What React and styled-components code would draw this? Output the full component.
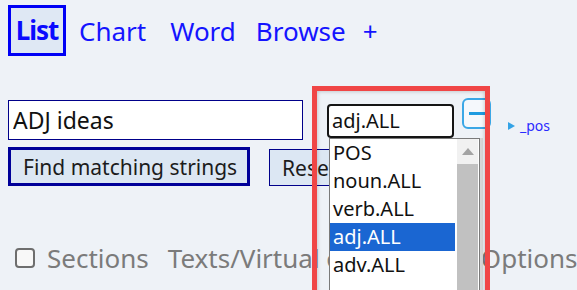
import React from "react"
import styled, { createGlobalStyle } from "styled-components"

const GlobalStyle = createGlobalStyle`
  body {
    margin: 0;
    background-color: #eef2f7;
    font-family: "Noto Sans", "Open Sans", sans-serif;
  }
`

const Page = styled.div`
  position: relative;
  height: 290px;
  overflow: hidden;
  padding: 5px 8px 0;
  box-sizing: border-box;
`

const TabBar = styled.nav`
  display: flex;
  align-items: center;
  height: 51px;
`

const Tab = styled.a`
  font-size: 26px;
  color: #1414ff;
  text-decoration: none;
  margin-right: ${(p) => p.$gap}px;
  ${(p) =>
    p.$active &&
    `
    font-weight: 700;
    border: 3px solid #0000f5;
    background-color: #dfe8f4;
    width: 58px;
    box-sizing: border-box;
    text-align: center;
    letter-spacing: -1px;
    line-height: 45px;
    color: #0a0aff;
  `}
`

const Form = styled.div`
  margin-top: 44px;
`

const Row = styled.div`
  display: flex;
  align-items: flex-start;
`

const TextInput = styled.input`
  width: 295px;
  height: 40px;
  box-sizing: border-box;
  border: 1px solid #00008a;
  background-color: white;
  font-family: inherit;
  font-size: 23px;
  color: #111;
  padding: 0 4px;
  outline: none;
`

const SelectWrap = styled.div`
  position: relative;
  margin: 4px 0 0 24px;
`

const SelectBox = styled.div`
  width: 127px;
  height: 34px;
  box-sizing: border-box;
  border: 2px solid #151515;
  border-radius: 4px;
  background-color: white;
  font-size: 20px;
  line-height: 30px;
  padding-left: 3px;
  color: #111;
`

const Dropdown = styled.div`
  position: absolute;
  top: 34px;
  left: 2px;
  width: 151px;
  height: 170px;
  box-sizing: border-box;
  border: 1px solid #7a7a7a;
  background-color: white;
  display: flex;
  z-index: 5;
  box-shadow: 3px 0 0 #d8d8d8;
`

const OptionList = styled.ul`
  list-style: none;
  margin: 0;
  padding: 0;
  width: 125px;
`

const Option = styled.li`
  height: 28px;
  line-height: 28px;
  font-size: 20px;
  padding-left: 3px;
  color: ${(p) => (p.$selected ? "white" : "#111")};
  background-color: ${(p) => (p.$selected ? "#1a66d2" : "transparent")};
`

const Scrollbar = styled.div`
  width: 21px;
  margin-left: 2px;
  background-color: #c1c1c1;
  display: flex;
  flex-direction: column;
`

const ScrollUp = styled.div`
  height: 25px;
  background-color: #f1f1f1;
  display: flex;
  align-items: center;
  justify-content: center;
`

const MinusButton = styled.button`
  margin: -2px 0 0 8px;
  width: 29px;
  height: 31px;
  box-sizing: border-box;
  border: 2px solid #3ba7e6;
  border-radius: 6px;
  background-color: #f5f8fc;
  display: flex;
  align-items: center;
  justify-content: center;
  padding: 0;

  span {
    width: 16px;
    height: 3px;
    background-color: #1e9be0;
  }
`

const PosLink = styled.a`
  margin: 16px 0 0 17px;
  display: flex;
  align-items: center;
  gap: 5px;
  font-size: 14px;
  color: #2a2aff;
  text-decoration: none;

  i {
    width: 0;
    height: 0;
    border-top: 4px solid transparent;
    border-bottom: 4px solid transparent;
    border-left: 7px solid #33a3e6;
  }
`

const ActionRow = styled(Row)`
  margin-top: 7px;
`

const Button = styled.button`
  font-family: inherit;
  font-size: 21px;
  color: #1c1c1c;
  background-color: #dce7f3;
  box-sizing: border-box;
  white-space: nowrap;
  border: ${(p) => (p.$primary ? "3px solid #000099" : "1px solid #00008a")};
  height: ${(p) => (p.$primary ? 39 : 37)}px;
  margin-top: ${(p) => (p.$primary ? 0 : 2)}px;
  margin-left: ${(p) => (p.$primary ? 0 : 19)}px;
  padding: 0 12px;
  width: ${(p) => (p.$primary ? "242px" : "auto")};
  text-align: left;
`

const OptionsRow = styled.div`
  display: flex;
  align-items: center;
  margin: 54px 0 0 7px;
  font-size: 26px;
  color: #7b7b7b;
`

const CheckBox = styled.span`
  flex-shrink: 0;
  width: 20px;
  height: 20px;
  box-sizing: border-box;
  border: 2px solid #6e6e6e;
  border-radius: 4px;
  background-color: #f8f8f8;
  margin-right: 12px;
`

const Label = styled.span`
  flex-shrink: 0;
  margin-right: ${(p) => p.$gap}px;
  white-space: nowrap;
`

const Highlight = styled.div`
  position: absolute;
  left: 312px;
  top: 86px;
  width: 178px;
  height: 215px;
  box-sizing: border-box;
  border: 5px solid #f04646;
  box-shadow: inset 0 0 4px rgba(0, 0, 0, 0.25);
  z-index: 10;
  pointer-events: none;
`

const options = ["POS", "noun.ALL", "verb.ALL", "adj.ALL", "adv.ALL"]

const App = () => {
  return (
    <>
      <GlobalStyle />
      <Page>
        <TabBar>
          <Tab $active $gap={13}>List</Tab>
          <Tab $gap={24}>Chart</Tab>
          <Tab $gap={20}>Word</Tab>
          <Tab $gap={17}>Browse</Tab>
          <Tab $gap={0}>+</Tab>
        </TabBar>
        <Form>
          <Row>
            <TextInput defaultValue="ADJ ideas" />
            <SelectWrap>
              <SelectBox>adj.ALL</SelectBox>
              <Dropdown>
                <OptionList>
                  {options.map((o, i) => (
                    <Option key={i} $selected={i === 3}>
                      {o}
                    </Option>
                  ))}
                </OptionList>
                <Scrollbar>
                  <ScrollUp>
                    <svg width="12" height="7" viewBox="0 0 12 7">
                      <path d="M0 7 L6 0 L12 7 Z" fill="#a3a3a3" />
                    </svg>
                  </ScrollUp>
                </Scrollbar>
              </Dropdown>
            </SelectWrap>
            <MinusButton>
              <span />
            </MinusButton>
            <PosLink>
              <i />
              _pos
            </PosLink>
          </Row>
          <ActionRow>
            <Button $primary>Find matching strings</Button>
            <Button>Reset</Button>
          </ActionRow>
        </Form>
        <OptionsRow>
          <CheckBox />
          <Label $gap={19}>Sections</Label>
          <Label $gap={59}>Texts/Virtual corpora</Label>
          <Label $gap={0}>Options</Label>
        </OptionsRow>
        <Highlight />
      </Page>
    </>
  )
}

export default App
